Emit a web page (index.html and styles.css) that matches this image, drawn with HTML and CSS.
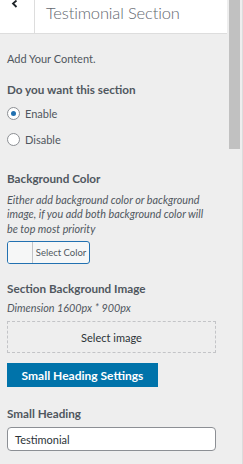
FILE: index.html
```html
<!DOCTYPE html>
<html>
<head>
<meta charset="utf-8">
<link rel="stylesheet" href="styles.css">
</head>
<body>
<div class="frame">
  <div class="panel">
    <div class="header">
      <div class="back">
        <svg class="chev" width="8" height="9" viewBox="0 0 8 9"><polyline points="5.5,0.5 2,3.5 5.5,7" fill="none" stroke="#1d2327" stroke-width="1.8"/></svg>
      </div>
      <div class="title">Testimonial Section</div>
    </div>
    <div class="content">
      <p class="intro">Add Your Content.</p>

      <div class="field f-radio">
        <div class="label">Do you want this section</div>
        <label class="radio first"><span class="dot checked"></span>Enable</label>
        <label class="radio"><span class="dot"></span>Disable</label>
      </div>

      <div class="field f-color">
        <div class="label">Background Color</div>
        <div class="desc d-color">Either add background color or background image, if you add both background color will be top most priority</div>
        <div class="colorbtn"><span class="swatch"></span><span class="ctext">Select Color</span></div>
      </div>

      <div class="field f-image">
        <div class="label">Section Background Image</div>
        <div class="desc d-image">Dimension 1600px * 900px</div>
        <div class="imgbox">Select image</div>
      </div>

      <div class="bluebtn">Small Heading Settings</div>

      <div class="field f-text">
        <div class="label">Small Heading</div>
        <div class="input">Testimonial</div>
      </div>
    </div>
  </div>
  <div class="scroll"><div class="thumb"></div></div>
</div>
</body>
</html>
```
FILE: styles.css
```css
html, body {
  margin: 0;
  padding: 0;
  background: #eeeeee;
  height: 464px;
  overflow: hidden;
}
body {
  font-family: Lato, "Noto Sans", sans-serif;
  color: #50575e;
}
.frame {
  display: flex;
  width: 243px;
  height: 464px;
}
.panel {
  width: 227px;
  flex: none;
  background: #eeeeee;
}
.header {
  display: flex;
  height: 33px;
  background: #fff;
  border-bottom: 1px solid #dddddd;
}
.back {
  width: 34px;
  flex: none;
  border-right: 1px solid #dddddd;
  position: relative;
}
.chev {
  position: absolute;
  left: 11px;
  top: 0;
}
.title {
  padding-left: 11px;
  font-size: 16.5px;
  font-weight: 300;
  letter-spacing: -0.15px;
  color: #646970;
  line-height: 26px;
  white-space: nowrap;
}
.content {
  padding: 17px 7px 0 7px;
}
.intro {
  margin: 0;
  font-size: 11px;
  line-height: 16px;
  color: #50575e;
}
.field {
  margin: 0;
}
.label {
  font-size: 11.7px;
  font-weight: 700;
  color: #50575e;
  line-height: 16px;
}
.f-radio { margin-top: 14px; }
.f-color { margin-top: 22px; }
.f-image { margin-top: 16px; }
.f-text { margin-top: 18px; }

.radio {
  display: flex;
  align-items: center;
  font-size: 11px;
  height: 18px;
  margin-top: 8px;
  color: #50575e;
}
.radio.first { margin-top: 7px; }
.dot {
  width: 11px;
  height: 11px;
  border: 1px solid #8c8f94;
  border-radius: 50%;
  background: #fff;
  margin-right: 5px;
  position: relative;
  flex: none;
}
.dot.checked::after {
  content: "";
  position: absolute;
  left: 3px;
  top: 3px;
  width: 5px;
  height: 5px;
  border-radius: 50%;
  background: #2271b1;
}
.desc {
  font-size: 10.8px;
  font-style: italic;
  line-height: 14.3px;
  color: #50575e;
}
.d-color {
  margin-top: 7px;
  max-width: 203px;
}
.d-image { margin-top: 5px; }
.colorbtn {
  display: flex;
  width: 83px;
  height: 23px;
  box-sizing: border-box;
  margin-top: 5px;
  border: 1px solid #2271b1;
  border-radius: 3px;
  background: #f6f7f7;
  font-size: 9.5px;
  color: #50575e;
  white-space: nowrap;
}
.swatch {
  width: 24px;
  flex: none;
  border-right: 1px solid #c3c4c7;
  background: #f6f7f7;
  border-radius: 2px 0 0 2px;
}
.ctext {
  flex: 1;
  display: flex;
  align-items: center;
  justify-content: center;
}
.imgbox {
  margin-top: 6px;
  border: 1px dashed #c3c4c7;
  display: flex;
  align-items: center;
  justify-content: center;
  font-size: 11px;
  color: #2c3338;
  width: 209px;
  box-sizing: border-box;
  height: 32px;
}
.bluebtn {
  margin-top: 10px;
  width: 151px;
  height: 24px;
  background: #0073aa;
  color: #fff;
  font-weight: 700;
  font-size: 12px;
  display: flex;
  align-items: center;
  justify-content: center;
}
.input {
  margin-top: 6px;
  width: 209px;
  height: 24px;
  box-sizing: border-box;
  border: 1px solid #8c8f94;
  border-radius: 4px;
  background: #fff;
  font-size: 11px;
  color: #2c3338;
  display: flex;
  align-items: center;
  padding-left: 7px;
}
.scroll {
  width: 16px;
  flex: none;
  background: #eeeeee;
  border-right: 1px solid #dcdcdc;
  box-sizing: border-box;
  padding-left: 2px;
}
.thumb {
  width: 11px;
  height: 149px;
  background: #c1c1c1;
}
```
